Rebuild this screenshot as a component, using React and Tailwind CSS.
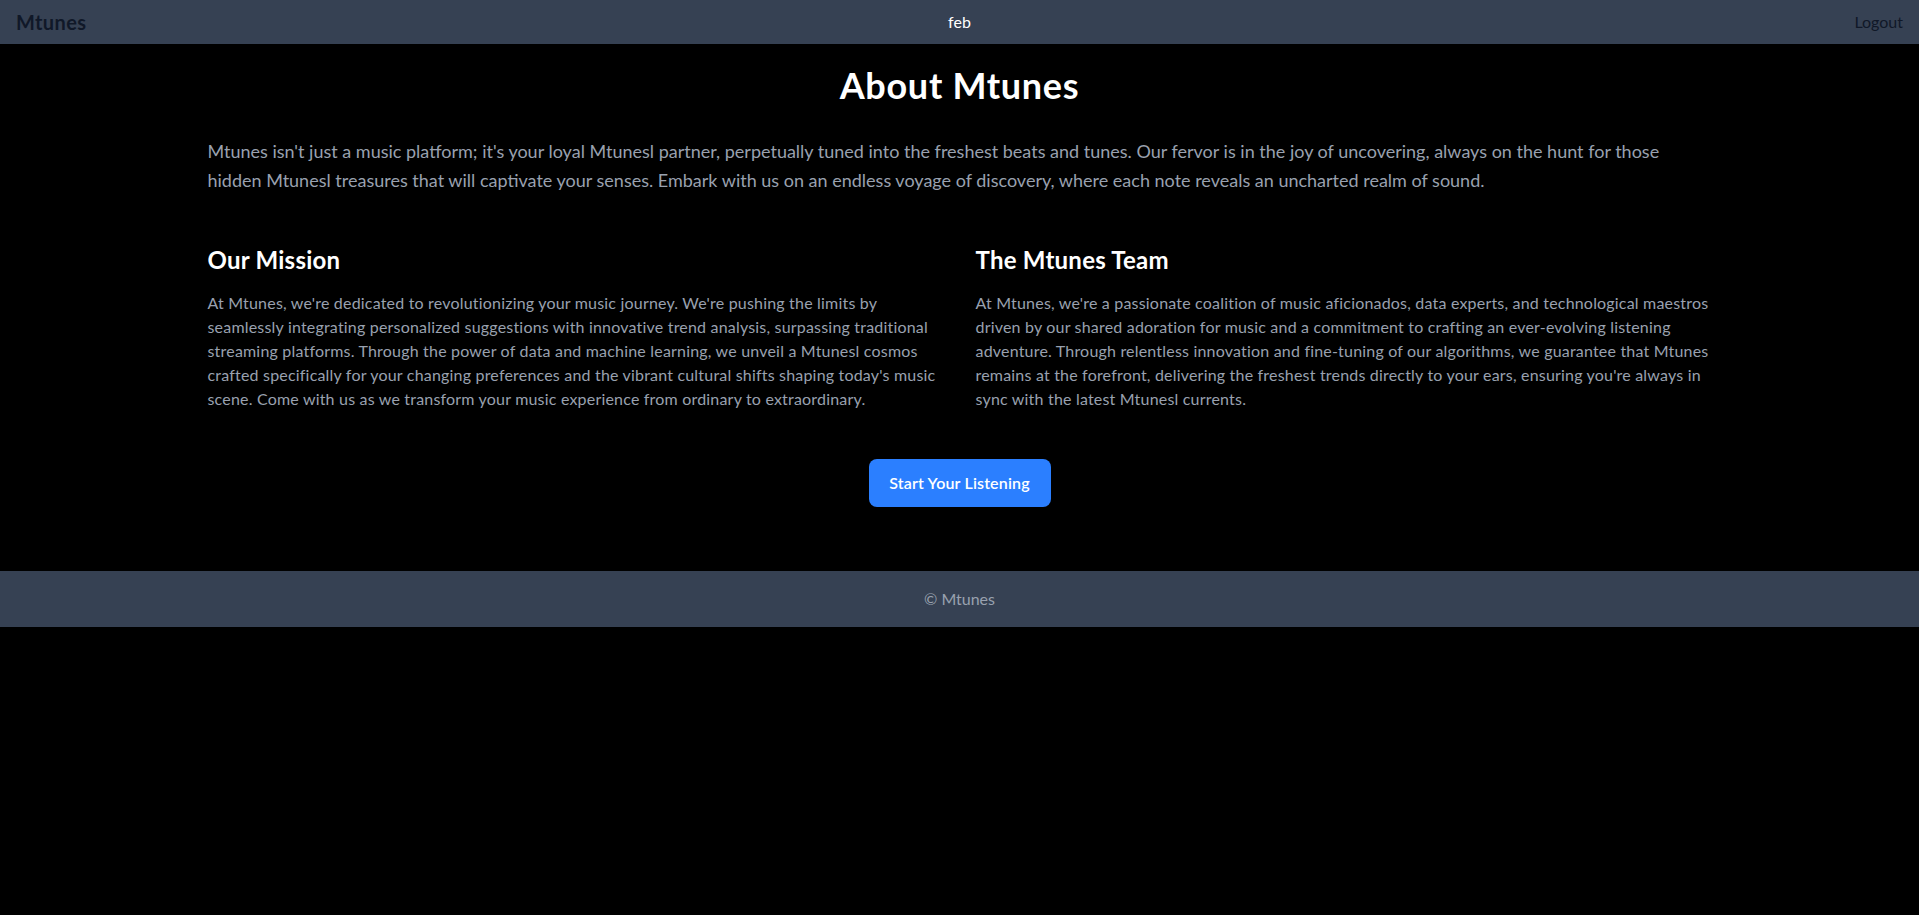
import React from "react";

const font = { fontFamily: '"Segoe UI", Lato, "Noto Sans", sans-serif' };

const Navbar = () => (
  <nav className="bg-gray-700 h-11 px-4 flex items-center justify-between">
    <span className="text-xl font-bold text-gray-900 w-32 tracking-[0.02em]">Mtunes</span>
    <span className="text-base text-white">feb</span>
    <div className="w-32 flex justify-end">
      <button className="text-base text-gray-900">Logout</button>
    </div>
  </nav>
);

const Section = ({ title, children }) => (
  <div>
    <h2 className="text-2xl font-bold text-white mb-[15px] tracking-[0.01em]">{title}</h2>
    <p className="text-base leading-6 text-gray-400 tracking-[0.012em]">{children}</p>
  </div>
);

export default function App() {
  return (
    <div className="bg-black min-h-[915px]" style={font}>
      <Navbar />
      <main className="container mx-auto px-4 pt-[21px] pb-16">
        <h1 className="text-4xl font-bold text-white text-center leading-10 mb-8 tracking-[0.02em]">About Mtunes</h1>
        <p className="text-lg leading-relaxed text-gray-400 mb-12">
          Mtunes isn't just a music platform; it's your loyal Mtunesl partner, perpetually tuned into the freshest beats and tunes. Our fervor is in the joy of uncovering, always on the hunt for those hidden Mtunesl treasures that will captivate your senses. Embark with us on an endless voyage of discovery, where each note reveals an uncharted realm of sound.
        </p>
        <div className="grid grid-cols-2 gap-8">
          <Section title="Our Mission">
            At Mtunes, we're dedicated to revolutionizing your music journey. We're pushing the limits by seamlessly integrating personalized suggestions with innovative trend analysis, surpassing traditional streaming platforms. Through the power of data and machine learning, we unveil a Mtunesl cosmos crafted specifically for your changing preferences and the vibrant cultural shifts shaping today's music scene. Come with us as we transform your music experience from ordinary to extraordinary.
          </Section>
          <Section title="The Mtunes Team">
            At Mtunes, we're a passionate coalition of music aficionados, data experts, and technological maestros driven by our shared adoration for music and a commitment to crafting an ever-evolving listening adventure. Through relentless innovation and fine-tuning of our algorithms, we guarantee that Mtunes remains at the forefront, delivering the freshest trends directly to your ears, ensuring you're always in sync with the latest Mtunesl currents.
          </Section>
        </div>
        <div className="flex justify-center mt-12">
          <button className="bg-blue-500 text-white font-semibold rounded-lg px-5 py-3 w-[182px] tracking-[0.01em]">
            Start Your Listening
          </button>
        </div>
      </main>
      <footer className="bg-gray-700 h-14 flex items-center justify-center">
        <span className="text-base text-gray-400">© Mtunes</span>
      </footer>
    </div>
  );
}
